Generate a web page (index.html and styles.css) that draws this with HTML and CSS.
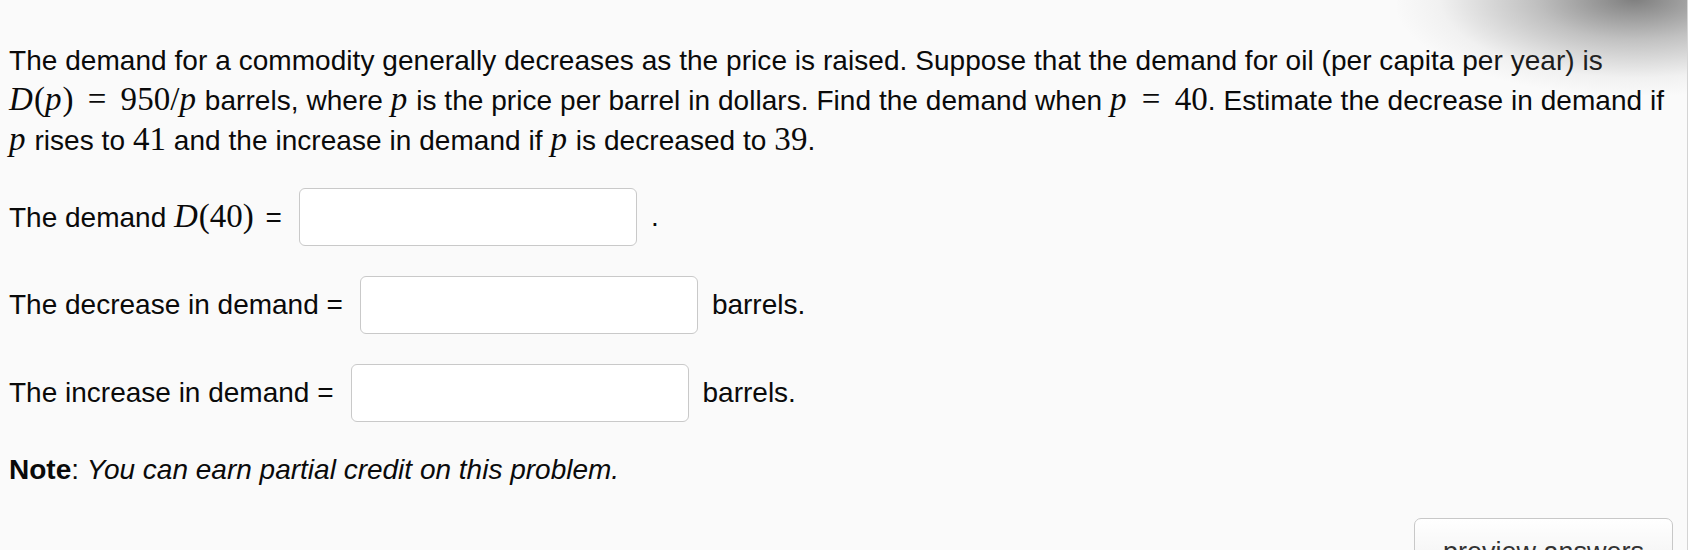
FILE: index.html
```html
<!DOCTYPE html>
<html>
<head>
<meta charset="utf-8">
<link rel="stylesheet" href="styles.css">
</head>
<body>
<div class="page">
  <div class="problem">
    <p class="statement">The demand for a commodity generally decreases as the price is raised. Suppose that the demand for oil (per capita per year) is<br><span class="m"><i>D</i>(<i>p</i>)<span class="rel">=</span>950/<i>p</i></span> barrels, where <span class="m"><i>p</i></span> is the price per barrel in dollars. Find the demand when <span class="m"><i>p</i><span class="rel">=</span>40</span>. Estimate the decrease in demand if<br><span class="m"><i>p</i></span> rises to <span class="m">41</span> and the increase in demand if <span class="m"><i>p</i></span> is decreased to <span class="m">39</span>.</p>
    <div class="row row-first">
      <span class="label">The demand <span class="m m-wide"><i>D</i>(40)</span> =</span>
      <input class="answer" type="text">
      <span class="after">.</span>
    </div>
    <div class="row">
      <span class="label">The decrease in demand =</span>
      <input class="answer" type="text">
      <span class="after">barrels.</span>
    </div>
    <div class="row">
      <span class="label">The increase in demand =</span>
      <input class="answer" type="text">
      <span class="after">barrels.</span>
    </div>
    <p class="note"><b>Note</b>: <i>You can earn partial credit on this problem.</i></p>
  </div>
  <div class="actions">
    <button class="btn" type="button">preview answers</button>
  </div>
  <div class="shade"></div>
</div>
</body>
</html>
```

FILE: styles.css
```css
html, body {
  margin: 0;
  padding: 0;
  background: #ffffff;
}
body {
  font-family: "Liberation Sans", Arial, sans-serif;
  font-size: 28px;
  color: #0a0a0a;
  overflow: hidden;
}
.page {
  position: relative;
  width: 1687px;
  height: 550px;
  background: #fafafa;
  border-right: 1px solid #d4d4d4;
  overflow: hidden;
}
.problem {
  padding: 41px 0 0 9px;
}
.statement {
  margin: 0;
  line-height: 40px;
  white-space: nowrap;
  letter-spacing: 0.05px;
}
.m {
  font-family: "Liberation Serif", "Times New Roman", serif;
  font-size: 33px;
  line-height: 1;
}
.m i {
  font-style: italic;
  margin-right: 1px;
}
.m-wide {
  margin-right: 4px;
}
.rel {
  margin: 0 0.43em;
}
.row {
  display: flex;
  align-items: center;
  height: 58px;
  margin-top: 30px;
}
.row-first {
  margin-top: 27px;
}
.answer {
  box-sizing: border-box;
  width: 338px;
  height: 58px;
  margin: 0 14px 0 17px;
  border: 1px solid #c9c9c9;
  border-radius: 6px;
  background: #fff;
  padding: 0 10px;
  font: inherit;
}
.note {
  margin: 28px 0 0 0;
  line-height: 40px;
}
.note b {
  font-weight: bold;
}
.actions {
  display: flex;
  justify-content: flex-end;
  padding-right: 14px;
  margin-top: 28px;
}
.btn {
  display: block;
  box-sizing: border-box;
  width: 259px;
  height: 60px;
  border: 1px solid #c8c8c8;
  border-radius: 7px;
  background: linear-gradient(#ffffff, #f0f0f0);
  font-family: "Liberation Sans", Arial, sans-serif;
  font-size: 27px;
  line-height: 31px;
  color: #333;
  padding: 8px 0 0 0;
  text-align: center;
  vertical-align: top;
}
.shade {
  position: absolute;
  top: -90px;
  right: -40px;
  width: 330px;
  height: 185px;
  background: radial-gradient(ellipse at 72% 48%, rgba(60,60,60,0.65) 0%, rgba(100,100,100,0.38) 30%, rgba(160,160,160,0.1) 58%, rgba(250,250,250,0) 72%);
  pointer-events: none;
}
```
